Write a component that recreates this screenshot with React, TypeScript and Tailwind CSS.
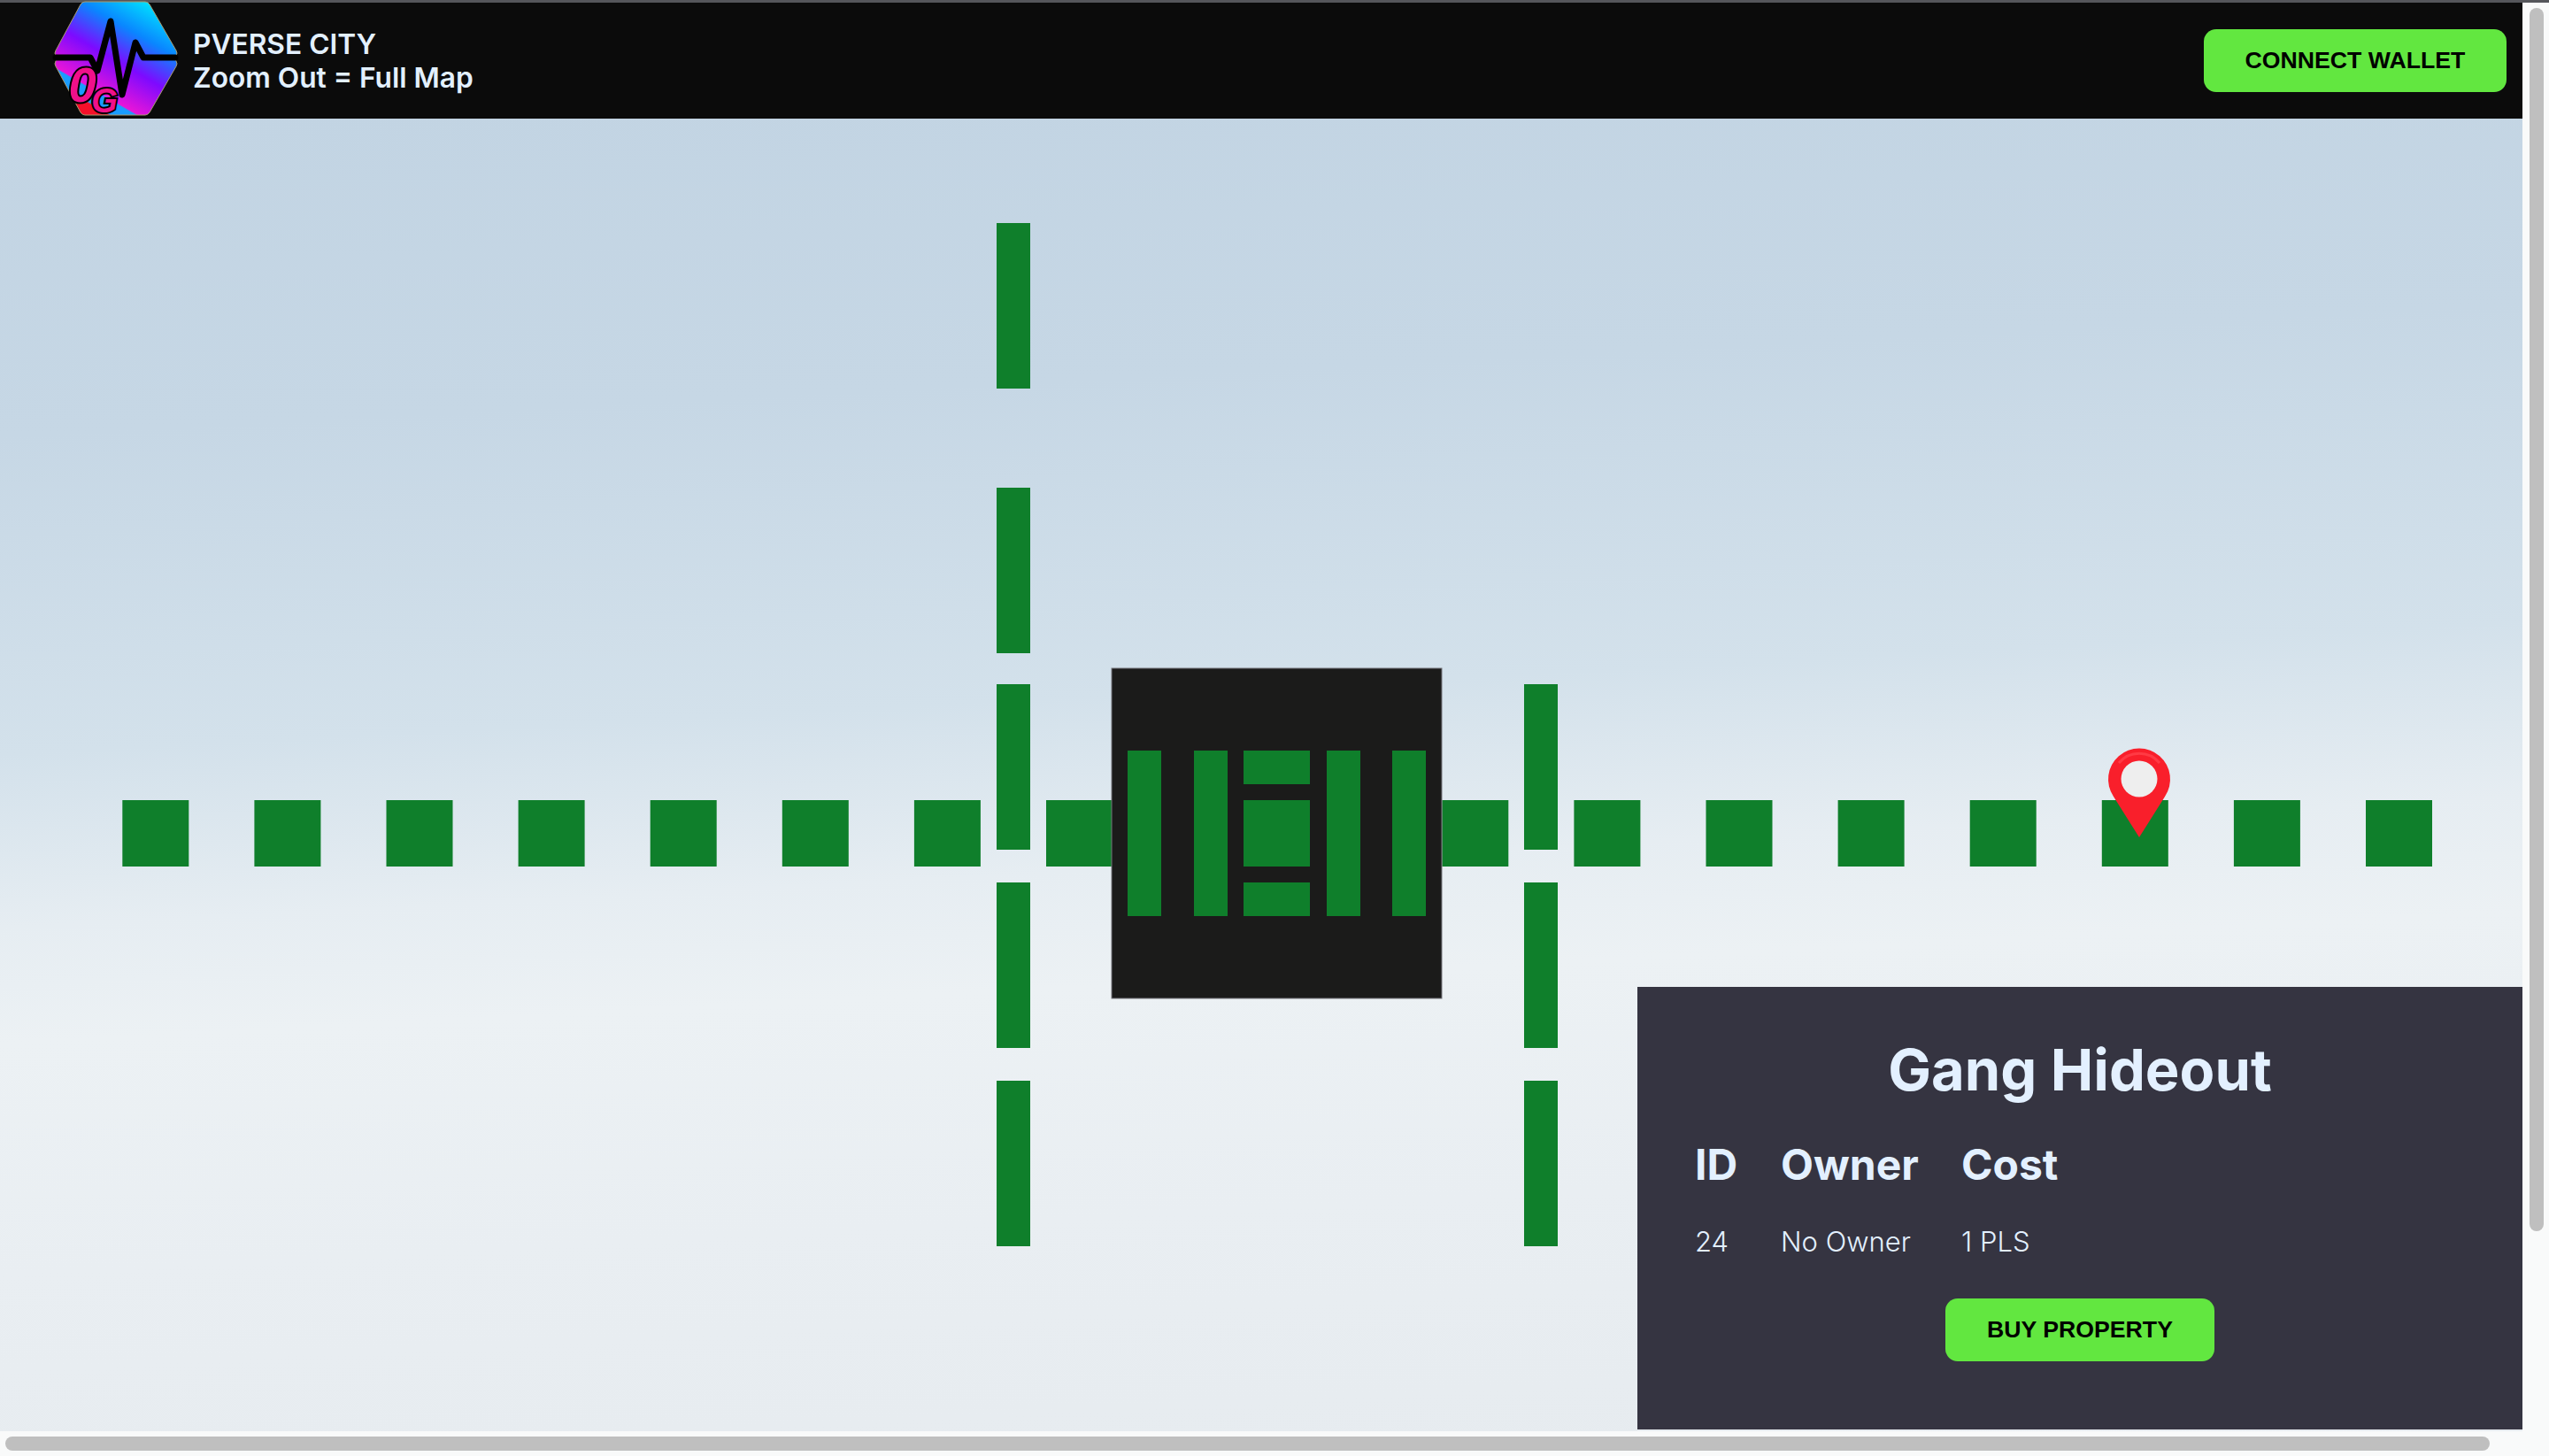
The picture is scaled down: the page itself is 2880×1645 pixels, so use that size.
import React from 'react';

const tileXs = [0, 1, 2, 3, 4, 5, 6, 7, 10, 11, 12, 13, 14, 15, 16, 17].map((i) => 138.3 + i * 149.1);
const leftRoadYs = [252, 551, 773, 997, 1221];
const rightRoadYs = [773, 997, 1221];
const buildingBars = [1274, 1349, 1499, 1573];
const green = '#0f7f2b';

// map y values are page coordinates, the svg starts under the header
function CityMap() {
  return (
    <svg className="absolute inset-0 h-full w-full blur-[0.6px]" viewBox="0 134 2850 1483">
      {tileXs.map((x) => (
        <rect key={x} x={x} y={904} width={75} height={75} fill={green} />
      ))}
      {leftRoadYs.map((y) => (
        <rect key={y} x={1126} y={y} width={38} height={187} fill={green} />
      ))}
      {rightRoadYs.map((y) => (
        <rect key={y} x={1722} y={y} width={38} height={187} fill={green} />
      ))}
      <rect x={1256} y={755} width={373} height={373} fill="#1b1b1a" stroke="#77777c" strokeWidth={1} />
      {buildingBars.map((x) => (
        <rect key={x} x={x} y={848} width={38} height={187} fill={green} />
      ))}
      <rect x={1405} y={848} width={75} height={38} fill={green} />
      <rect x={1405} y={904} width={75} height={75} fill={green} />
      <rect x={1405} y={997} width={75} height={38} fill={green} />
      <path d="M2417 946 L2388 900 A35 35 0 1 1 2446 900 Z" fill="#f91f2b" />
      <path d="M2394 862 A30 30 0 0 1 2440 862" fill="none" stroke="#ff3a44" strokeWidth={3} />
      <circle cx={2417} cy={880} r={20.5} fill="#eeeeee" />
    </svg>
  );
}

function Logo() {
  return (
    <svg className="-mt-[6px] ml-[60px] h-[130px] w-[142px] shrink-0 overflow-visible" viewBox="60 1 142 130">
      <defs>
        <linearGradient id="hex" gradientUnits="userSpaceOnUse" x1="167" y1="0" x2="91.5" y2="131">
          <stop offset="0" stopColor="#00e5ff" />
          <stop offset="0.26" stopColor="#0a86ff" />
          <stop offset="0.51" stopColor="#7d0aff" />
          <stop offset="0.78" stopColor="#e815d8" />
          <stop offset="0.79" stopColor="#1a9cff" />
          <stop offset="0.88" stopColor="#1a9cff" />
          <stop offset="0.89" stopColor="#f5102a" />
          <stop offset="1" stopColor="#f5102a" />
        </linearGradient>
      </defs>
      <path
        d="M96 2 H164 Q167 2 169 5 L199 57 Q201 60 199 63 L197 65 L199 69 Q201 72 199 75 L169 127 Q167 130 164 130 H96 Q93 130 91 127 L63 75 Q61 72 63 69 L65 65 L63 63 Q61 60 63 57 L91 5 Q93 2 96 2 Z"
        fill="url(#hex)"
        stroke="#a89a70"
        strokeWidth={1}
      />
      <path
        d="M63 65 H102 L110 80 L125 24 L138 107 L153 48 L162 65 H198"
        fill="none"
        stroke="#000"
        strokeWidth={7}
        strokeLinejoin="round"
        strokeLinecap="round"
      />
      <text
        x={93}
        y={115}
        textAnchor="middle"
        fontFamily="'Liberation Sans', sans-serif"
        fontWeight={700}
        fontStyle="italic"
        fontSize={56}
        fill="#f0108a"
        stroke="#000"
        strokeWidth={4}
        paintOrder="stroke"
      >
        0
      </text>
      <text
        x={118}
        y={127}
        textAnchor="middle"
        fontFamily="'Liberation Sans', sans-serif"
        fontWeight={700}
        fontStyle="italic"
        fontSize={38}
        fill="#f0108a"
        stroke="#000"
        strokeWidth={4}
        paintOrder="stroke"
      >
        G
      </text>
    </svg>
  );
}

function PropertyPanel() {
  return (
    <div className="absolute right-0 bottom-[2px] flex h-[500px] w-[1000px] flex-col bg-[#353441] pt-[56px] font-['Inter',sans-serif] text-[#e3f0ff]">
      <h2 className="text-center text-[65px] leading-[76px] font-bold">Gang Hideout</h2>
      <div className="mt-[40px] ml-[65px] grid grid-cols-[97px_204px_auto] items-center">
        <div className="text-[48px] leading-[58px] font-bold">ID</div>
        <div className="text-[48px] leading-[58px] font-bold">Owner</div>
        <div className="text-[48px] leading-[58px] font-bold">Cost</div>
        <div className="mt-[38px] text-[31px] leading-[40px] font-light">24</div>
        <div className="mt-[38px] text-[31px] leading-[40px] font-light">No Owner</div>
        <div className="mt-[38px] text-[31px] leading-[40px] font-light">1 PLS</div>
      </div>
      <button className="mx-auto mt-[44px] h-[71px] w-[304px] rounded-[14px] bg-[#62e740] pb-[2px] font-['Liberation_Sans',sans-serif] text-[26.67px] font-bold text-black">
        BUY PROPERTY
      </button>
    </div>
  );
}

export default function App() {
  return (
    <div className="flex h-[1645px] w-[2880px] flex-col overflow-hidden bg-[#f9fafa]">
      <div className="h-[3px] shrink-0 bg-[#55565b]" />
      <div className="flex min-h-0 flex-1">
        <div className="flex min-w-0 flex-1 flex-col">
          <header className="flex h-[131px] shrink-0 items-center bg-[#0b0b0b]">
            <Logo />
            <div className="ml-[16px] font-['Inter',sans-serif] text-[31.7px] leading-[38px] font-semibold text-[#e3f0ff]">
              <div>PVERSE CITY</div>
              <div>Zoom Out = Full Map</div>
            </div>
            <button className="mr-[18px] ml-auto h-[71px] w-[342px] rounded-[14px] bg-[#62e740] pb-[2px] font-['Liberation_Sans',sans-serif] text-[26.67px] font-bold text-black">
              CONNECT WALLET
            </button>
          </header>
          <main className="relative flex-1 bg-[linear-gradient(177deg,#c2d4e3_0%,#c6d7e5_22%,#d3e1eb_44%,#e6edf2_56%,#ecf1f4_64%,#e9eef2_80%,#e6ebef_100%)]">
            <CityMap />
            <PropertyPanel />
          </main>
        </div>
        <div className="w-[30px] shrink-0 pt-[6px] pl-[8px]">
          <div className="h-[1382px] w-[16px] rounded-full bg-[#bfbfbf]" />
        </div>
      </div>
      <div className="h-[28px] shrink-0 pt-[6px] pl-[6px]">
        <div className="h-[16px] w-[2807px] rounded-full bg-[#bfbfbf]" />
      </div>
    </div>
  );
}
